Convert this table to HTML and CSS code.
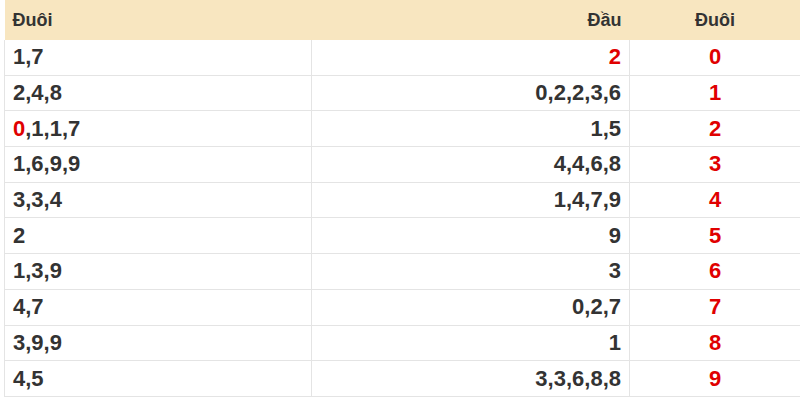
FILE: index.html
```html
<!DOCTYPE html>
<html>
<head>
<meta charset="utf-8">
<link rel="stylesheet" href="styles.css">
</head>
<body>
<table class="loto">
  <thead>
    <tr><th class="c1">Đuôi</th><th class="c2">Đầu</th><th class="c3">Đuôi</th></tr>
  </thead>
  <tbody>
    <tr><td class="c1">1,7</td><td class="c2"><span class="red">2</span></td><td class="c3 red">0</td></tr>
    <tr><td class="c1">2,4,8</td><td class="c2">0,2,2,3,6</td><td class="c3 red">1</td></tr>
    <tr><td class="c1"><span class="red">0</span>,1,1,7</td><td class="c2">1,5</td><td class="c3 red">2</td></tr>
    <tr><td class="c1">1,6,9,9</td><td class="c2">4,4,6,8</td><td class="c3 red">3</td></tr>
    <tr><td class="c1">3,3,4</td><td class="c2">1,4,7,9</td><td class="c3 red">4</td></tr>
    <tr><td class="c1">2</td><td class="c2">9</td><td class="c3 red">5</td></tr>
    <tr><td class="c1">1,3,9</td><td class="c2">3</td><td class="c3 red">6</td></tr>
    <tr><td class="c1">4,7</td><td class="c2">0,2,7</td><td class="c3 red">7</td></tr>
    <tr><td class="c1">3,9,9</td><td class="c2">1</td><td class="c3 red">8</td></tr>
    <tr><td class="c1">4,5</td><td class="c2">3,3,6,8,8</td><td class="c3 red">9</td></tr>
  </tbody>
</table>
</body>
</html>
```
FILE: styles.css
```css
html, body {
  margin: 0;
  padding: 0;
  background: #fff;
}
body {
  padding-left: 4px;
  font-family: "Liberation Sans", Arial, Helvetica, sans-serif;
  color: #333;
}
.loto {
  border-collapse: collapse;
  width: 797px;
  table-layout: fixed;
}
.loto th {
  background: #f8e6c0;
  height: 40px;
  padding: 0 8px;
  font-size: 18px;
  font-weight: bold;
  color: #333;
  border: none;
}
.loto td {
  height: 34.7px;
  padding: 0 8px;
  font-size: 22px;
  font-weight: bold;
  border: 1px solid #e4e4e4;
}
.loto tbody tr:first-child td {
  border-top: none;
}
.loto .c1 {
  width: 291px;
  text-align: left;
}
.loto .c2 {
  width: 302px;
  text-align: right;
}
.loto .c3 {
  text-align: center;
}
.red {
  color: #e00000;
}
```
